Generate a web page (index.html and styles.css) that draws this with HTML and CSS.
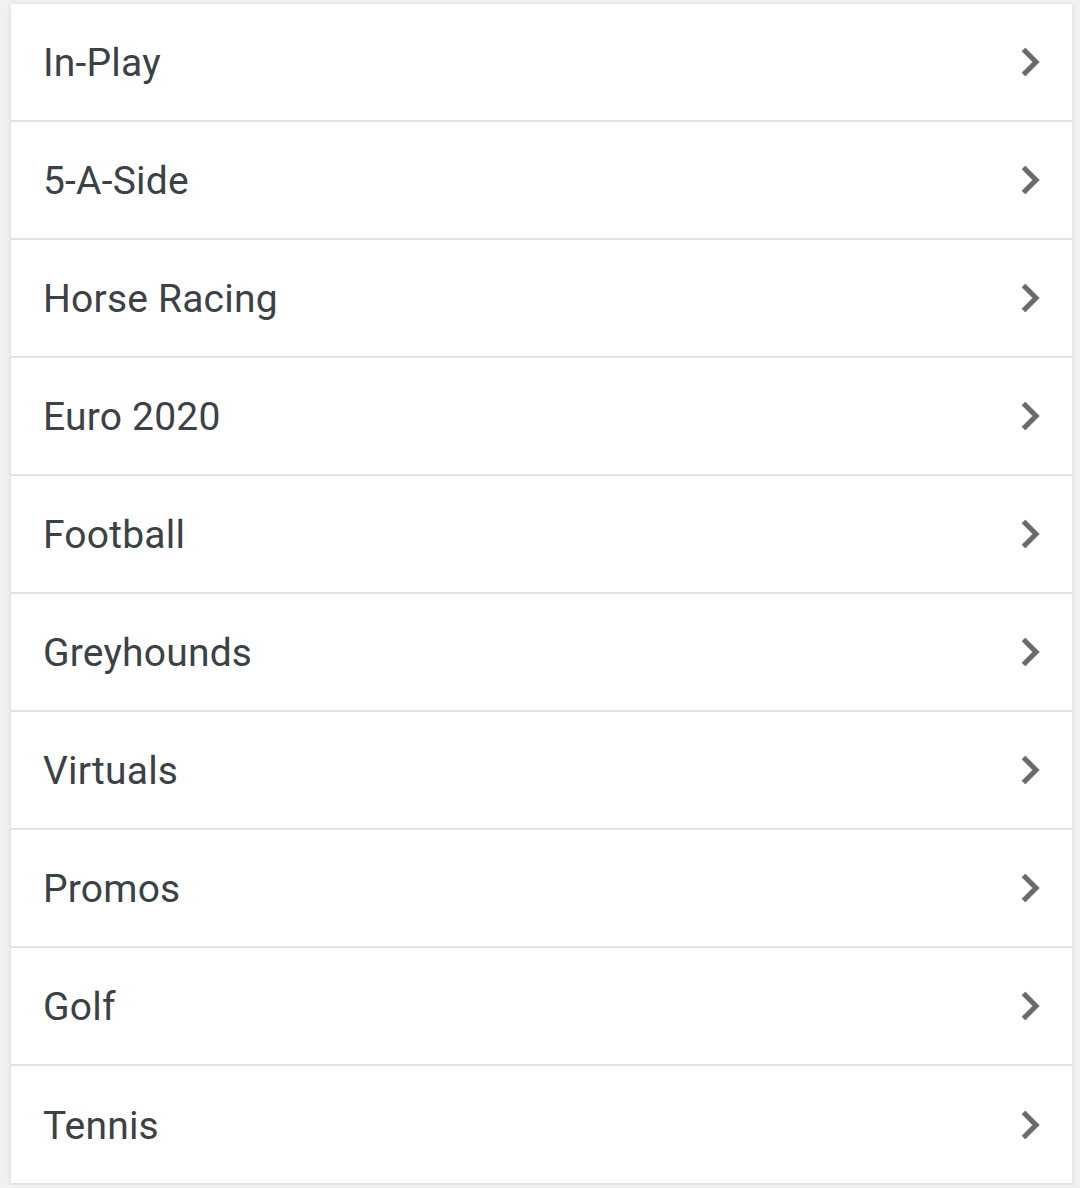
FILE: index.html
```html
<!DOCTYPE html>
<html lang="en">
<head>
<meta charset="utf-8">
<title>Menu</title>
<link rel="stylesheet" href="styles.css">
</head>
<body>
<ul class="menu">
  <li class="item"><span class="label">In-Play</span><svg class="chev" viewBox="0 0 24 24"><path d="M10 6L8.59 7.41 13.17 12l-4.58 4.59L10 18l6-6z"/></svg></li>
  <li class="item"><span class="label">5-A-Side</span><svg class="chev" viewBox="0 0 24 24"><path d="M10 6L8.59 7.41 13.17 12l-4.58 4.59L10 18l6-6z"/></svg></li>
  <li class="item"><span class="label">Horse Racing</span><svg class="chev" viewBox="0 0 24 24"><path d="M10 6L8.59 7.41 13.17 12l-4.58 4.59L10 18l6-6z"/></svg></li>
  <li class="item"><span class="label">Euro 2020</span><svg class="chev" viewBox="0 0 24 24"><path d="M10 6L8.59 7.41 13.17 12l-4.58 4.59L10 18l6-6z"/></svg></li>
  <li class="item"><span class="label">Football</span><svg class="chev" viewBox="0 0 24 24"><path d="M10 6L8.59 7.41 13.17 12l-4.58 4.59L10 18l6-6z"/></svg></li>
  <li class="item"><span class="label">Greyhounds</span><svg class="chev" viewBox="0 0 24 24"><path d="M10 6L8.59 7.41 13.17 12l-4.58 4.59L10 18l6-6z"/></svg></li>
  <li class="item"><span class="label">Virtuals</span><svg class="chev" viewBox="0 0 24 24"><path d="M10 6L8.59 7.41 13.17 12l-4.58 4.59L10 18l6-6z"/></svg></li>
  <li class="item"><span class="label">Promos</span><svg class="chev" viewBox="0 0 24 24"><path d="M10 6L8.59 7.41 13.17 12l-4.58 4.59L10 18l6-6z"/></svg></li>
  <li class="item"><span class="label">Golf</span><svg class="chev" viewBox="0 0 24 24"><path d="M10 6L8.59 7.41 13.17 12l-4.58 4.59L10 18l6-6z"/></svg></li>
  <li class="item"><span class="label">Tennis</span><svg class="chev" viewBox="0 0 24 24"><path d="M10 6L8.59 7.41 13.17 12l-4.58 4.59L10 18l6-6z"/></svg></li>
</ul>
</body>
</html>
```
FILE: styles.css
```css
html, body {
  margin: 0;
  padding: 0;
  background: #f1f1f1;
}
body {
  padding: 4px 8px 0 11px;
  font-family: Roboto, "Noto Sans", sans-serif;
}
.menu {
  list-style: none;
  margin: 0;
  padding: 0;
  background: #ffffff;
  box-shadow: 0 1px 6px rgba(0, 0, 0, 0.10);
}
.item {
  display: flex;
  align-items: center;
  justify-content: space-between;
  height: 116px;
  padding: 0 14px 0 32px;
  border-bottom: 2px solid #dfe4e7;
  box-sizing: content-box;
}
.item:last-child {
  height: 117px;
  border-bottom: 2px solid #e2e2e2;
}
.label {
  font-size: 39px;
  color: #3b4246;
  letter-spacing: 0.2px;
  padding-top: 2px;
}
.chev {
  width: 56px;
  height: 56px;
  fill: #6a6a6a;
  stroke: #6a6a6a;
  stroke-width: 0.3;
  stroke-linejoin: round;
}
```
